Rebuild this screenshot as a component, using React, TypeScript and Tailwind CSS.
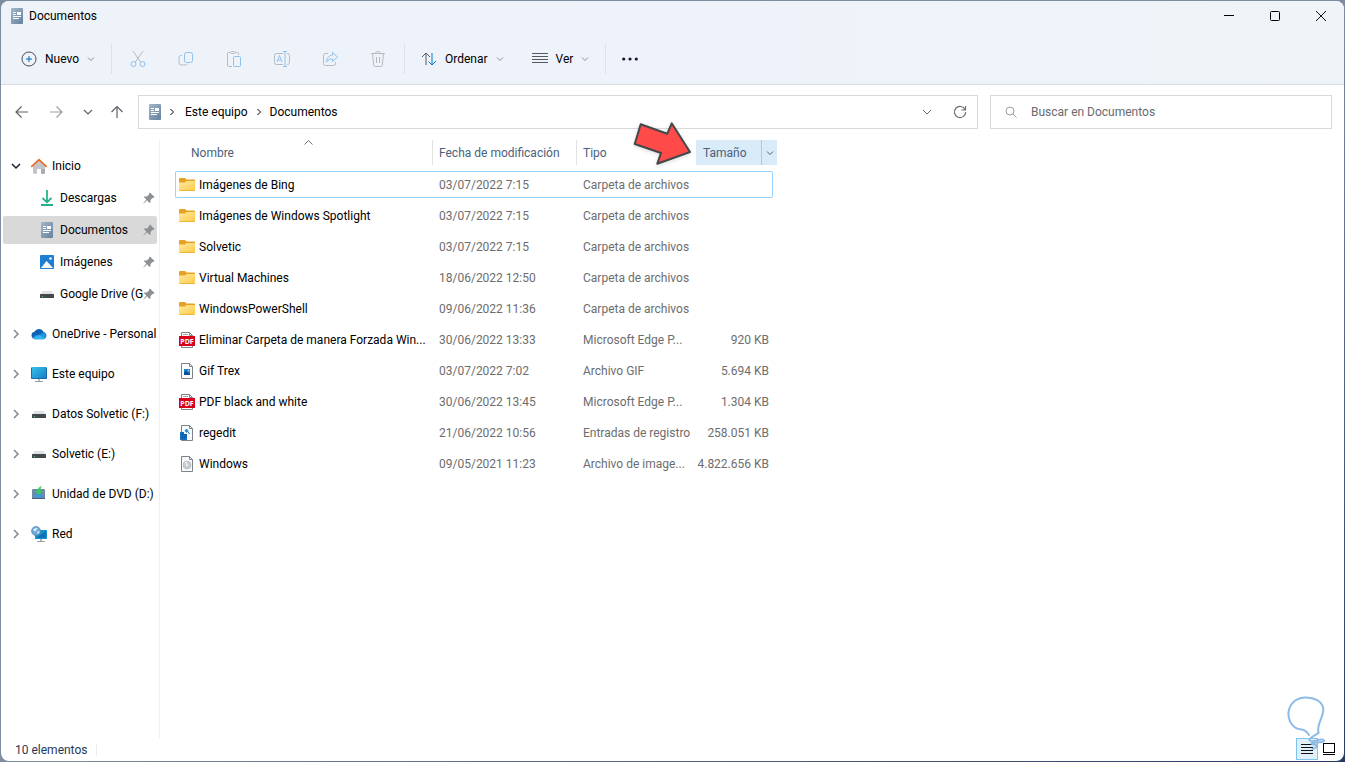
import React, { useState } from "react";

interface FileRow {
  name: string;
  date: string;
  type: string;
  size?: string;
  icon: "folder" | "pdf" | "gif" | "reg" | "iso";
}

const FILES: FileRow[] = [
  { name: "Imágenes de Bing", date: "03/07/2022 7:15", type: "Carpeta de archivos", icon: "folder" },
  { name: "Imágenes de Windows Spotlight", date: "03/07/2022 7:15", type: "Carpeta de archivos", icon: "folder" },
  { name: "Solvetic", date: "03/07/2022 7:15", type: "Carpeta de archivos", icon: "folder" },
  { name: "Virtual Machines", date: "18/06/2022 12:50", type: "Carpeta de archivos", icon: "folder" },
  { name: "WindowsPowerShell", date: "09/06/2022 11:36", type: "Carpeta de archivos", icon: "folder" },
  { name: "Eliminar Carpeta de manera Forzada Win...", date: "30/06/2022 13:33", type: "Microsoft Edge P...", size: "920 KB", icon: "pdf" },
  { name: "Gif Trex", date: "03/07/2022 7:02", type: "Archivo GIF", size: "5.694 KB", icon: "gif" },
  { name: "PDF black and white", date: "30/06/2022 13:45", type: "Microsoft Edge P...", size: "1.304 KB", icon: "pdf" },
  { name: "regedit", date: "21/06/2022 10:56", type: "Entradas de registro", size: "258.051 KB", icon: "reg" },
  { name: "Windows", date: "09/05/2021 11:23", type: "Archivo de image...", size: "4.822.656 KB", icon: "iso" },
];

function Icon({ children, className = "" }: { children: React.ReactNode; className?: string }) {
  return (
    <svg width="16" height="16" viewBox="0 0 16 16" fill="none" className={`shrink-0 ${className}`} aria-hidden="true">
      {children}
    </svg>
  );
}

function DocIcon() {
  return (
    <Icon>
      <defs>
        <linearGradient id="docGrad" x1="0" y1="0" x2="1" y2="1">
          <stop offset="0" stopColor="#a3b8c8" />
          <stop offset="1" stopColor="#64819f" />
        </linearGradient>
      </defs>
      <rect x="2" y="0" width="12" height="16" rx="1" fill="url(#docGrad)" />
      <path d="M4 4.500h3M4 6.500h3M4 8.500h8M4 10.500h6" stroke="#fff" />
      <rect x="8" y="4" width="4" height="3" fill="#fff" />
    </Icon>
  );
}

function HomeIcon() {
  return (
    <Icon>
      <path d="M2 7.500L8 2.500l6 5V15a.8.8 0 0 1-.8.8H10V11H6v4.800H2.800A.8.8 0 0 1 2 15z" fill="#c3c5c8" />
      <path d="M10 11h4v4a.8.8 0 0 1-.8.8H10z" fill="#a9acaf" />
      <path d="M.8 8.300L8 1.700l7.200 6.600" stroke="#e8702a" strokeWidth="1.800" strokeLinecap="round" strokeLinejoin="round" />
    </Icon>
  );
}

function DownloadIcon() {
  return (
    <Icon>
      <path d="M8 0v12M3.500 8L8 12.300 12.500 8" stroke="#27b18a" strokeWidth="1.800" />
      <path d="M2 15h12" stroke="#27b18a" strokeWidth="2" />
    </Icon>
  );
}

function PictureIcon() {
  return (
    <Icon>
      <rect x="1" y="1" width="14" height="14" rx="1" fill="#1d7fd1" />
      <path d="M2 14L7.500 7l6.500 7z" fill="#fff" />
      <circle cx="11.500" cy="4.500" r="1.300" fill="#fff" />
    </Icon>
  );
}

function DriveIcon() {
  return (
    <Icon>
      <path d="M3.500 5h9L15 8.500H1z" fill="#dfe2e4" />
      <rect x="1" y="8" width="14" height="4" rx=".5" fill="#45494d" />
      <rect x="3" y="10" width="1" height="1" fill="#4bd06a" />
    </Icon>
  );
}

function CloudIcon() {
  return (
    <Icon>
      <path d="M4 13a3.700 3.700 0 0 1-.6-7.300A5 5 0 0 1 12.500 6 3.600 3.600 0 0 1 12.500 13z" fill="#0f62b5" />
      <path d="M3 13.200a3 3 0 0 1 .5-3.700L9 8.500l3.500-2A3.400 3.400 0 0 1 12.600 13.200z" fill="#2092de" />
      <path d="M2 12l6-3 6 3.300-1.400.9H4z" fill="#33b4ef" />
    </Icon>
  );
}

function MonitorIcon() {
  return (
    <Icon>
      <defs>
        <linearGradient id="monGrad" x1="0" y1="0" x2="1" y2="1">
          <stop offset="0" stopColor="#37c4e8" />
          <stop offset="1" stopColor="#127bc4" />
        </linearGradient>
      </defs>
      <rect x="0" y="1" width="16" height="12" rx="1" fill="url(#monGrad)" />
      <path d="M.5 2v10a.5.500 0 0 0 .5.500h14a.5.500 0 0 0 .5-.5V2" stroke="#1a6ca8" />
      <path d="M7 13h2v2H7z" fill="#b8bdc1" />
      <path d="M4 15.500h8" stroke="#9aa0a5" />
    </Icon>
  );
}

function DvdIcon() {
  return (
    <Icon>
      <path d="M2 3h11a1 1 0 0 1 1 1v8H1V4a1 1 0 0 1 1-1z" fill="#6f8ba5" />
      <path d="M2 11l5-5 6 5z" fill="#3b98dd" />
      <path d="M1 12.500h13" stroke="#3d607e" />
      <path d="M11 0C8 .6 6.800 2.500 6.800 5H4.500L8 9l3.500-4H9.300c0-1.500.2-2.800 1.700-5z" fill="#2fd257" />
    </Icon>
  );
}

function NetworkIcon() {
  return (
    <Icon>
      <rect x="4" y="4" width="12" height="9" rx=".7" fill="#1691cf" />
      <path d="M5 12l10-7v7z" fill="#0f70b5" />
      <path d="M9 13h2v2H9z" fill="#adb3b8" />
      <path d="M6 15.500h8" stroke="#9aa0a5" />
      <circle cx="5" cy="5" r="4.500" fill="#6fa8d6" stroke="#4681b4" strokeWidth=".6" />
      <path d="M2 3.500c1.500-1.500 3-2 4.500-1.300L5 5 3.500 5.500zM6 6l2-1 .6 1.500L7 8z" fill="#d6ecf8" />
    </Icon>
  );
}

function PinIcon() {
  return (
    <svg width="12" height="12" viewBox="0 0 12 12" className="shrink-0" aria-hidden="true">
      <path d="M7 .5L11.500 5l-1 .9-.8-.2L7.500 8l.1 2-1 .9L4 8.300.7 11.500.300 11.200 3.300 7.600 1 5.200l.9-.9 2 .1L6.200 2.200 6 1.400z" fill="#8b9294" />
    </svg>
  );
}

function Sheet() {
  return (
    <>
      <path d="M2.500.5h8l3 3v12h-11z" fill="#fafbfc" stroke="#7d8388" />
      <path d="M10.500.5v3h3" stroke="#7d8388" />
    </>
  );
}

function FileIcon({ kind }: { kind: FileRow["icon"] }) {
  if (kind === "folder") {
    return (
      <Icon>
        <defs>
          <linearGradient id="folderGrad" x1="0" y1="0" x2="1" y2="1">
            <stop offset="0" stopColor="#ffe9a2" />
            <stop offset="1" stopColor="#fcca46" />
          </linearGradient>
        </defs>
        <path d="M0 2a1 1 0 0 1 1-1h5l1.500 1.500H15a1 1 0 0 1 1 1V6H0z" fill="#e6a122" />
        <path d="M0 5.500h6L7.500 4H16v9a1 1 0 0 1-1 1H1a1 1 0 0 1-1-1z" fill="url(#folderGrad)" />
        <path d="M.5 13.500h15" stroke="#efb530" />
      </Icon>
    );
  }
  if (kind === "pdf") {
    return (
      <Icon>
        <Sheet />
        <path d="M4 2.500h5" stroke="#a5a9ac" />
        <rect x="0" y="4" width="16" height="10" fill="#d9001b" />
        <text x="8" y="12" textAnchor="middle" fill="#fff" fontSize="7" fontWeight="700" fontFamily="Open Sans, sans-serif">
          PDF
        </text>
      </Icon>
    );
  }
  if (kind === "gif") {
    return (
      <Icon>
        <Sheet />
        <rect x="5" y="6" width="6" height="6" fill="#1583d1" />
        <path d="M5 12V9.500L7 8l4 3v1z" fill="#0b4e94" />
        <circle cx="9.500" cy="7.500" r=".8" fill="#bfe3fa" />
      </Icon>
    );
  }
  if (kind === "reg") {
    return (
      <Icon>
        <Sheet />
        <path d="M1 7h4v2h3v6H1z" fill="#1379c8" />
        <path d="M3.500 7v8M5.800 9v6M1 9.500h7M1 12h7" stroke="#0b4f94" strokeWidth=".6" />
        <path d="M7.500 3.500l2.200 2.200-2.200 2.200-2-2.200z" fill="#2a92dd" />
        <path d="M9 6.500l1.500 2.500" stroke="#1379c8" />
      </Icon>
    );
  }
  return (
    <Icon>
      <Sheet />
      <circle cx="8" cy="9" r="4" fill="#c9cccf" stroke="#adb1b4" strokeWidth=".6" />
      <path d="M8 9L5.500 6.500A3.500 3.500 0 0 1 8 5.500z" fill="#eceeef" />
      <circle cx="8" cy="9" r="1" fill="#f5f6f7" />
    </Icon>
  );
}

function Chevron({ className = "" }: { className?: string }) {
  return (
    <svg width="8" height="8" viewBox="0 0 8 8" fill="none" stroke="currentColor" className={`shrink-0 ${className}`} aria-hidden="true">
      <path d="M1 2.500l3 3 3-3" />
    </svg>
  );
}

function TreeChevron({ className = "" }: { className?: string }) {
  return (
    <svg width="10" height="10" viewBox="0 0 10 10" fill="none" stroke="currentColor" strokeWidth="1.500" className={`mr-[10px] shrink-0 ${className}`} aria-hidden="true">
      <path d="M1 3l4 4 4-4" />
    </svg>
  );
}

function Divider() {
  return <span className="h-[30px] w-px bg-[#dde2e8]" />;
}

// Disabled toolbar actions: gray base strokes with a light blue accent
const ACTIONS = [
  {
    label: "Cortar",
    art: (
      <>
        <path d="M3 0l7.800 11.300M13 0L5.200 11.300" stroke="#b6bbc0" />
        <circle cx="3.500" cy="13" r="2.500" stroke="#91c1ea" />
        <circle cx="12.500" cy="13" r="2.500" stroke="#91c1ea" />
      </>
    ),
  },
  {
    label: "Copiar",
    art: (
      <>
        <path d="M4 4.500H3a2 2 0 0 0-2 2V12a2 2 0 0 0 2 2h4.500a2 2 0 0 0 1.800-1.200" stroke="#b6bbc0" />
        <rect x="6.500" y="1.500" width="8" height="10" rx="2" stroke="#91c1ea" />
      </>
    ),
  },
  {
    label: "Pegar",
    art: (
      <>
        <path d="M6 15.500H2.500a1 1 0 0 1-1-1v-12a1 1 0 0 1 1-1H4m6 0h1.500a1 1 0 0 1 1 1V4" stroke="#b6bbc0" />
        <rect x="4.500" y=".5" width="5" height="2" rx="1" stroke="#b6bbc0" />
        <rect x="7.500" y="5.500" width="7" height="10" rx="1" stroke="#91c1ea" />
      </>
    ),
  },
  {
    label: "Cambiar nombre",
    art: (
      <>
        <path d="M9 2.500H2.500a2 2 0 0 0-2 2v7a2 2 0 0 0 2 2H9M13 2.500h.5a2 2 0 0 1 2 2v7a2 2 0 0 1-2 2H13" stroke="#b6bbc0" />
        <path d="M3 11l2.500-6.500L8 11M4 9h3M11 1v14M9 .5h4M9 15.500h4" stroke="#91c1ea" />
      </>
    ),
  },
  {
    label: "Compartir",
    art: (
      <>
        <path d="M6 2.500H3.500a2 2 0 0 0-2 2v8a2 2 0 0 0 2 2h8a2 2 0 0 0 2-2V11" stroke="#b6bbc0" />
        <path d="M10.500 1.500l5 4.500-5 4.500V8C7.500 8 6 9 4.500 11 4.800 7 7 4.500 10.500 4z" stroke="#91c1ea" strokeLinejoin="round" />
      </>
    ),
  },
  {
    label: "Eliminar",
    art: (
      <path
        d="M1 2.500h14M5.500 2.500c0-2.600 5-2.600 5 0M2.500 2.500l1.200 11.500a1.500 1.500 0 0 0 1.500 1.500h5.600a1.500 1.500 0 0 0 1.500-1.500l1.200-11.500M6.500 6v6M9.500 6v6"
        stroke="#b6bbc0"
      />
    ),
  },
];

const QUICK_ACCESS = [
  { label: "Descargas", icon: <DownloadIcon /> },
  { label: "Documentos", icon: <DocIcon /> },
  { label: "Imágenes", icon: <PictureIcon /> },
  { label: "Google Drive (G", icon: <DriveIcon /> },
];

const TREE = [
  { label: "OneDrive - Personal", icon: <CloudIcon /> },
  { label: "Este equipo", icon: <MonitorIcon /> },
  { label: "Datos Solvetic (F:)", icon: <DriveIcon /> },
  { label: "Solvetic (E:)", icon: <DriveIcon /> },
  { label: "Unidad de DVD (D:)", icon: <DvdIcon /> },
  { label: "Red", icon: <NetworkIcon /> },
];

function TitleBar() {
  return (
    <header className="flex h-[30px] items-center justify-between">
      <div className="flex items-center gap-1 pl-2">
        <DocIcon />
        <h1>Documentos</h1>
      </div>
      <div className="flex h-full">
        <button aria-label="Minimizar" className="flex w-[46px] items-center justify-center">
          <svg width="10" height="10" stroke="#000"><path d="M0 4.500h10" /></svg>
        </button>
        <button aria-label="Maximizar" className="flex w-[46px] items-center justify-center">
          <svg width="10" height="10" fill="none" stroke="#000"><rect x=".5" y=".5" width="9" height="9" rx="1" /></svg>
        </button>
        <button aria-label="Cerrar" className="flex w-[46px] items-center justify-center">
          <svg width="10" height="10" stroke="#111"><path d="M0 0l10 10M10 0L0 10" /></svg>
        </button>
      </div>
    </header>
  );
}

function Toolbar() {
  return (
    <div className="flex h-[54px] items-center border-b border-[#d9dee4] pt-[2px]">
      <button className="mr-4 flex items-center gap-2 pl-5">
        <Icon>
          <circle cx="8" cy="8" r="7" stroke="#4a4e52" />
          <path d="M8 5v6M5 8h6" stroke="#0067c0" />
        </Icon>
        <span>Nuevo</span>
        <Chevron className="text-[#888e95]" />
      </button>
      <Divider />
      <div className="flex px-[2px]">
        {ACTIONS.map((a) => (
          <button key={a.label} aria-label={a.label} disabled className="flex h-8 w-12 items-center justify-center">
            <Icon>{a.art}</Icon>
          </button>
        ))}
      </div>
      <Divider />
      <button className="ml-4 flex items-center gap-2">
        <Icon>
          <path d="M5 14V2M1 6l4-4 4 4" stroke="#53585d" />
          <path d="M11 2v12M7.500 10.500L11 14l4-4" stroke="#0078d4" />
        </Icon>
        <span>Ordenar</span>
        <Chevron className="text-[#888e95]" />
      </button>
      <button className="mx-4 ml-7 flex items-center gap-2">
        <Icon>
          <path d="M0 2.500h16M0 5.500h16M0 8.500h16M0 11.500h16" stroke="#53585d" />
        </Icon>
        <span>Ver</span>
        <Chevron className="text-[#888e95]" />
      </button>
      <Divider />
      <button aria-label="Ver más" className="ml-4">
        <Icon className="text-[#16162e]">
          <circle cx="1.700" cy="8" r="1.600" fill="currentColor" />
          <circle cx="8" cy="8" r="1.600" fill="currentColor" />
          <circle cx="14.300" cy="8" r="1.600" fill="currentColor" />
        </Icon>
      </button>
    </div>
  );
}

function AddressRow() {
  return (
    <div className="flex items-center pt-[10px] pr-3 pb-[7px] pl-3">
      <nav className="flex w-[125px] items-center text-[#5c6166]">
        <button aria-label="Atrás" className="mr-5">
          <Icon><path d="M15 8H3M8.500 2.500L3 8l5.500 5.500" stroke="currentColor" strokeWidth="1.200" /></Icon>
        </button>
        <button aria-label="Adelante" className="mr-4 text-[#9a9fa4]">
          <Icon><path d="M1 8h12M7.500 2.500L13 8l-5.500 5.500" stroke="currentColor" strokeWidth="1.200" /></Icon>
        </button>
        <button aria-label="Ubicaciones recientes" className="mr-3">
          <Icon><path d="M3 6l4 4 4-4" stroke="currentColor" strokeWidth="1.200" /></Icon>
        </button>
        <button aria-label="Subir">
          <Icon><path d="M8 14V3M2.500 8L8 2.500 13.500 8" stroke="currentColor" strokeWidth="1.200" /></Icon>
        </button>
      </nav>
      <div className="flex h-[34px] flex-1 items-center border border-[#d9d9d9] bg-white pr-[9px] pl-2">
        <DocIcon />
        <Chevron className="mx-[5px] -rotate-90" />
        <a href="#equipo" className="ml-1">Este equipo</a>
        <Chevron className="mx-[7px] -rotate-90" />
        <a href="#documentos">Documentos</a>
        <button aria-label="Ubicaciones anteriores" className="mr-[17px] ml-auto text-[#6b7075]">
          <Icon><path d="M4 6l4 4 4-4" stroke="currentColor" /></Icon>
        </button>
        <button aria-label="Actualizar" className="text-[#6b7075]">
          <Icon><path d="M13 5.500A5.600 5.600 0 1 0 13.600 8M13.500 2v4h-4" stroke="currentColor" strokeWidth="1.200" /></Icon>
        </button>
      </div>
      <label className="ml-3 flex h-[34px] w-[342px] items-center border border-[#d9d9d9] bg-white pl-3">
        <Icon><circle cx="7" cy="7" r="4" stroke="#989da2" /><path d="M10 10l3.500 3.500" stroke="#989da2" /></Icon>
        <input
          type="text"
          aria-label="Buscar"
          placeholder="Buscar en Documentos"
          className="ml-3 min-w-0 flex-1 outline-none placeholder:text-[#6a6a6f]"
        />
      </label>
    </div>
  );
}

function Sidebar() {
  const [selected, setSelected] = useState("Documentos");
  return (
    <aside className="mt-1 w-[159px] shrink-0 border-r border-[#f0f0f0] pt-[10px]">
      <button className="flex h-8 w-full items-center pl-[10px]">
        <TreeChevron className="text-[#1c1c30]" />
        <HomeIcon />
        <span className="ml-[5px]">Inicio</span>
      </button>
      {QUICK_ACCESS.map((item) => (
        <div key={item.label} className="h-8 px-[2px] py-[2px]">
          <button
            onClick={() => setSelected(item.label)}
            className={`flex h-7 w-full items-center rounded-xs pr-[2px] pl-9 ${selected === item.label ? "bg-[#d9d9d9]" : ""}`}
          >
            {item.icon}
            <span className="ml-[5px] flex-1 text-left whitespace-nowrap">{item.label}</span>
            <PinIcon />
          </button>
        </div>
      ))}
      <div className="pt-1">
        {TREE.map((item) => (
          <button key={item.label} className="flex h-10 w-full items-center pl-[10px]">
            <TreeChevron className="-rotate-90 text-[#84888c]" />
            {item.icon}
            <span className="ml-[5px] whitespace-nowrap">{item.label}</span>
          </button>
        ))}
      </div>
    </aside>
  );
}

function FileTable() {
  const [focused, setFocused] = useState(FILES[0].name);
  return (
    <main className="relative min-w-0 flex-1 pl-[15px]">
      <table className="w-[598px] table-fixed border-separate border-spacing-x-0 border-spacing-y-1 text-left">
        <colgroup>
          <col className="w-[257px]" />
          <col className="w-[144px]" />
          <col className="w-[120px]" />
          <col />
        </colgroup>
        <thead>
          <tr className="h-[27px] text-[#4c607a]">
            <th className="relative p-0 align-top font-normal">
              <button className="h-[25px] pl-4">Nombre</button>
              <svg width="9" height="5" fill="none" stroke="#6b7075" className="absolute top-0 left-[129px]">
                <path d="M.5 4.500l4-4 4 4" />
              </svg>
            </th>
            <th className="p-0 align-top font-normal">
              <button className="h-[25px] border-l border-[#e3e3e3] pl-[6px]">Fecha de modificación</button>
            </th>
            <th className="p-0 align-top font-normal">
              <button className="h-[25px] border-l border-[#e3e3e3] pl-[6px]">Tipo</button>
            </th>
            <th className="p-0 align-top font-normal">
              <div className="-mr-1 flex h-[25px] bg-[#d9ebf9]">
                <button className="flex-1 pl-[7px] text-left">Tamaño</button>
                <button aria-label="Filtrar por tamaño" className="flex w-4 items-center justify-center border-l border-[#a9cce6]">
                  <Chevron />
                </button>
              </div>
            </th>
          </tr>
        </thead>
        <tbody>
          {FILES.map((f) => {
            const edge = focused === f.name ? "border-[#99d1ff]" : "border-transparent";
            return (
              <tr key={f.name} onClick={() => setFocused(f.name)} className="h-[27px] whitespace-nowrap text-[#6d6d6d]">
                <td className={`rounded-l-xs border-y border-l p-0 ${edge}`}>
                  <div className="flex items-center gap-1 pl-[3px] text-black">
                    <FileIcon kind={f.icon} />
                    <span>{f.name}</span>
                  </div>
                </td>
                <td className={`border-y p-0 pl-[7px] ${edge}`}>{f.date}</td>
                <td className={`border-y p-0 pl-[7px] ${edge}`}>{f.type}</td>
                <td className={`rounded-r-xs border-y border-r p-0 pr-[3px] text-right ${edge}`}>{f.size}</td>
              </tr>
            );
          })}
        </tbody>
      </table>

      {/* pointer over the size column */}
      <svg width="62" height="48" viewBox="0 0 62 48" className="absolute -top-[15px] left-[471px] drop-shadow-sm" aria-hidden="true">
        <path
          d="M9.700 3.300L36.300 12.700 40.700 2.300 59 31 26.300 42.700 30 32 3.700 23z"
          fill="#ff4a4a"
          stroke="#45484b"
          strokeWidth="2"
          strokeLinejoin="round"
        />
      </svg>
    </main>
  );
}

function StatusBar() {
  return (
    <footer className="relative flex h-[23px] items-center pr-1 pl-[14px] text-[#1e395b]">
      <span>10 elementos</span>
      <span className="ml-[9px] h-3 w-px bg-[#ececec]" />
      <div className="ml-auto flex h-full items-start">
        <button aria-label="Detalles" className="flex h-[22px] w-[22px] items-center justify-center border border-[#7cc4f2] bg-[#dff0fb]">
          <svg width="12" height="12" stroke="#111"><path d="M0 1.500h12M0 4.500h12M0 7.500h12M0 10.500h12" /></svg>
        </button>
        <button aria-label="Iconos grandes" className="flex h-[22px] w-[22px] items-center justify-center">
          <svg width="13" height="13" fill="none" stroke="#000"><rect x=".5" y=".5" width="11" height="9" /><path d="M0 11.500h12" /></svg>
        </button>
      </div>
      <svg width="42" height="60" viewBox="0 0 42 60" fill="none" stroke="#8dbbe8" strokeWidth="2" className="pointer-events-none absolute right-[17px] bottom-2" aria-hidden="true">
        <path d="M24 42c-2-3-4-5-7-5.500C9 36 4 30 3.500 22 3 13 9 5 20 4.500c9-.3 17.500 3.500 18.300 11.500C38.800 24 31 32 33.500 40" strokeLinecap="round" />
        <path d="M33.500 40c-3 2-10 5-9 7.500s14-3 14.500 0c.4 3-12 1-12.500 3 0 1.500 7 1 5.500 3-.7 1-3 2-4.500 2.500" strokeLinecap="round" />
      </svg>
    </footer>
  );
}

export default function App() {
  return (
    <div className="flex min-h-screen bg-linear-to-br from-[#7d8da0] via-[#7d8da0] to-[#263a63] p-px font-[Roboto,sans-serif] text-xs text-black">
      <div className="flex flex-1 flex-col overflow-hidden rounded-lg bg-white">
        <div className="bg-linear-to-r from-[#eef3fa] via-[#eef3fb] to-[#eff4f8]">
          <TitleBar />
          <Toolbar />
        </div>
        <AddressRow />
        <div className="flex flex-1">
          <Sidebar />
          <FileTable />
        </div>
        <StatusBar />
      </div>
    </div>
  );
}
